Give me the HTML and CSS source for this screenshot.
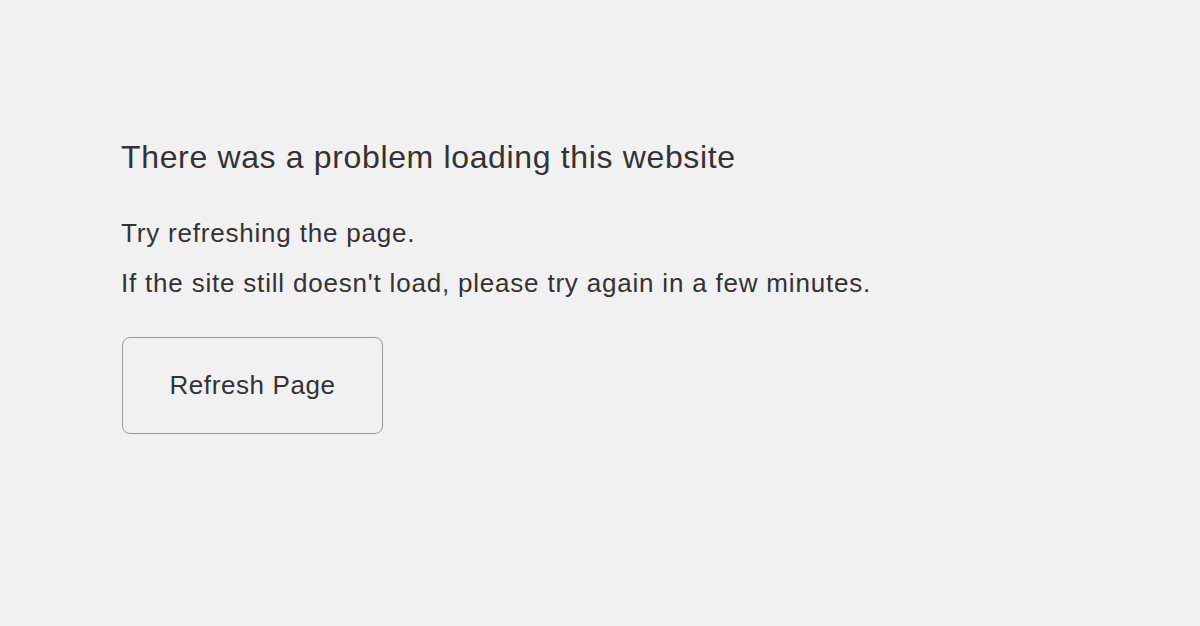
FILE: index.html
```html
<!DOCTYPE html>
<html lang="en">
<head>
<meta charset="utf-8">
<title>Problem loading website</title>
<link rel="stylesheet" href="styles.css">
</head>
<body>
<main class="error">
  <h1 class="error-title">There was a problem loading this website</h1>
  <p class="error-text">Try refreshing the page.</p>
  <p class="error-text">If the site still doesn't load, please try again in a few minutes.</p>
  <button class="refresh-btn" type="button">Refresh Page</button>
</main>
</body>
</html>
```

FILE: styles.css
```css
html, body {
  margin: 0;
  padding: 0;
  background: #f1f1f1;
  color: #333;
  font-family: "Liberation Sans", Arial, Helvetica, sans-serif;
}
.error {
  padding: 137px 0 0 121px;
  display: flex;
  flex-direction: column;
  align-items: flex-start;
}
.error-title {
  margin: 0 0 31px;
  font-size: 32px;
  font-weight: normal;
  line-height: 40px;
  letter-spacing: 0.65px;
}
.error-text {
  margin: 0;
  font-size: 26px;
  line-height: 50px;
  letter-spacing: 0.8px;
}
.refresh-btn {
  margin-top: 29px;
  margin-left: 1px;
  width: 261px;
  height: 97px;
  background: transparent;
  border: 1px solid #9a9a9a;
  border-radius: 8px;
  color: #333;
  font-family: inherit;
  font-size: 26px;
  letter-spacing: 0.6px;
  padding: 0;
  cursor: pointer;
}
```
